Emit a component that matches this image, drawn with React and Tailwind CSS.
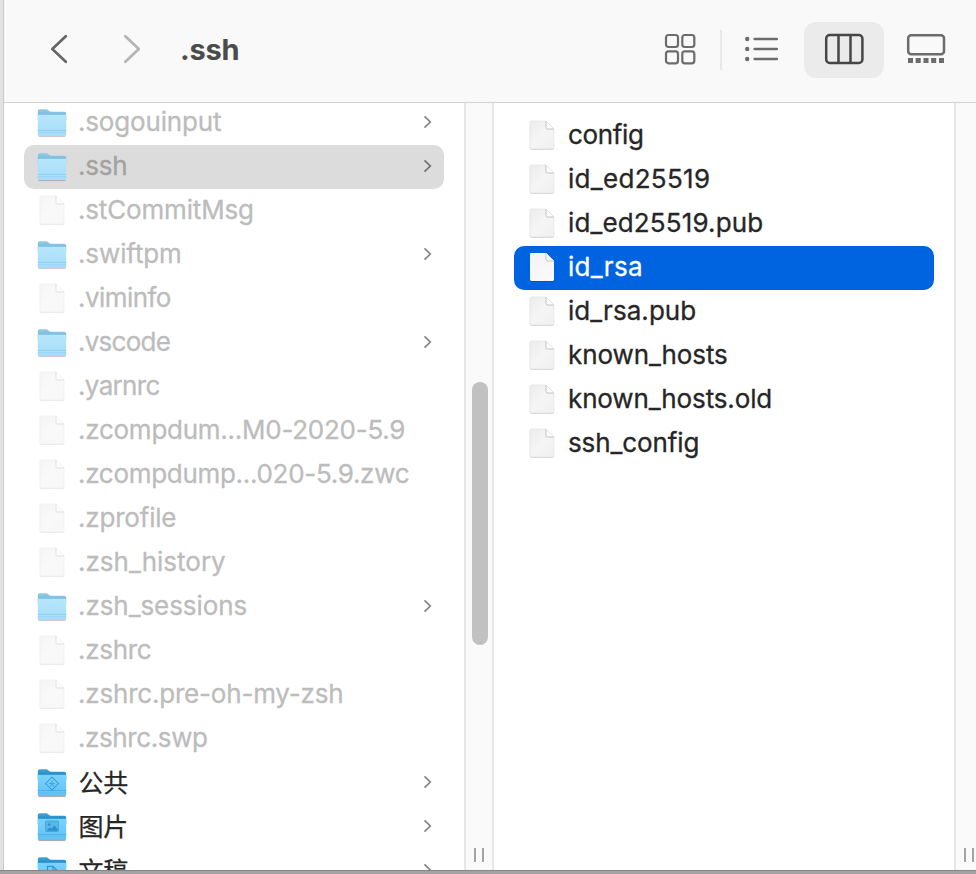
import React from "react";

const HOME_ITEMS = [
  { name: ".sogouinput", kind: "folder", dim: true, track: "tracking-[-0.17px]" },
  { name: ".ssh", kind: "folder", dim: true, selected: true, track: "tracking-[-0.25px]" },
  { name: ".stCommitMsg", kind: "file", dim: true, track: "tracking-[-0.17px]" },
  { name: ".swiftpm", kind: "folder", dim: true, track: "tracking-[-0.12px]" },
  { name: ".viminfo", kind: "file", dim: true, track: "tracking-[-0.55px]" },
  { name: ".vscode", kind: "folder", dim: true, track: "tracking-[-0.75px]" },
  { name: ".yarnrc", kind: "file", dim: true, track: "tracking-[-0.67px]" },
  { name: ".zcompdum...M0-2020-5.9", kind: "file", dim: true, track: "tracking-[-0.26px]" },
  { name: ".zcompdump...020-5.9.zwc", kind: "file", dim: true, track: "tracking-[-0.3px]" },
  { name: ".zprofile", kind: "file", dim: true, track: "tracking-[-0.2px]" },
  { name: ".zsh_history", kind: "file", dim: true, track: "tracking-[0px]" },
  { name: ".zsh_sessions", kind: "folder", dim: true, track: "tracking-[-0.07px]" },
  { name: ".zshrc", kind: "file", dim: true, track: "tracking-[-0.3px]" },
  { name: ".zshrc.pre-oh-my-zsh", kind: "file", dim: true, track: "tracking-[-0.2px]" },
  { name: ".zshrc.swp", kind: "file", dim: true, track: "tracking-[-0.4px]" },
  { name: "公共", kind: "folder", glyph: "public", track: "tracking-[-0.3px]" },
  { name: "图片", kind: "folder", glyph: "pictures", track: "tracking-[-0.3px]" },
  { name: "文稿", kind: "folder", glyph: "documents", track: "tracking-[-0.3px]" },
];

const SSH_ITEMS = [
  { name: "config", track: "tracking-[-0.35px]" },
  { name: "id_ed25519", track: "tracking-[0.3px]" },
  { name: "id_ed25519.pub", track: "tracking-[0.14px]" },
  { name: "id_rsa", selected: true, track: "tracking-[0.3px]" },
  { name: "id_rsa.pub", track: "tracking-[0.05px]" },
  { name: "known_hosts", track: "tracking-[-0.1px]" },
  { name: "known_hosts.old", track: "tracking-[-0.13px]" },
  { name: "ssh_config", track: "tracking-[-0.1px]" },
];

const STAMPS = [
  [-143, 145], [392, 125], [927, 105],
  [110, 415], [645, 395],
  [-165, 690], [370, 670], [905, 650],
  [88, 950], [623, 930],
];

function Defs() {
  return (
    <svg className="absolute size-0" aria-hidden="true">
      <defs>
        <linearGradient id="front" x1="0" y1="0" x2="0" y2="1">
          <stop offset="0" stopColor="#7bd3fd" />
          <stop offset="1" stopColor="#5fc0f5" />
        </linearGradient>
        <linearGradient id="back" x1="0" y1="0" x2="0" y2="1">
          <stop offset="0" stopColor="#4aa3d2" />
          <stop offset=".5" stopColor="#1f8dc8" />
          <stop offset="1" stopColor="#1f8dc8" />
        </linearGradient>
        <linearGradient id="frontDim" x1="0" y1="0" x2="0" y2="1">
          <stop offset="0" stopColor="#b6e6fc" />
          <stop offset="1" stopColor="#a5dcf8" />
        </linearGradient>
        <linearGradient id="backDim" x1="0" y1="0" x2="0" y2="1">
          <stop offset="0" stopColor="#96c9e6" />
          <stop offset=".5" stopColor="#7bbce2" />
          <stop offset="1" stopColor="#7bbce2" />
        </linearGradient>
        <linearGradient id="paper" x1="0" y1="0" x2="1" y2="1">
          <stop offset="0" stopColor="#ececec" />
          <stop offset="0.5" stopColor="#f5f5f5" />
          <stop offset="1" stopColor="#f0f0f0" />
        </linearGradient>
        <linearGradient id="paperLit" x1="0" y1="0" x2="1" y2="1">
          <stop offset="0" stopColor="#f3f3f3" />
          <stop offset="1" stopColor="#fbfbfb" />
        </linearGradient>
      </defs>
    </svg>
  );
}

function FolderIcon({ dim, glyph }) {
  return (
    <svg width="30" height="30" viewBox="0 0 30 30">
      <path d="M1.500 28.300h27" stroke="#000" strokeOpacity={dim ? ".2" : ".32"} strokeWidth="1.600" />
      <path d="M.8 3.200C.8 2 1.500 1.200 2.700 1.200h6.100c1.200 0 1.700.4 2.400 1l1 .9c.5.500 1 .7 1.700.7h13.300c1.200 0 2 .8 2 2V12H.8z" fill={dim ? "url(#backDim)" : "url(#back)"} />
      <path d="M.8 8.200c0-1 .5-1.400 1.400-1.400h25.600c.9 0 1.400.4 1.400 1.400v18.200c0 1-.8 1.700-1.800 1.700H2.600c-1 0-1.800-.7-1.800-1.700z" fill={dim ? "url(#frontDim)" : "url(#front)"} />
      <path d="M.8 22.500h28.400" stroke="#3ba3dd" strokeOpacity={dim ? ".25" : ".6"} strokeWidth="1" />
      <path d="M.8 24.500h28.400" stroke="#46aee6" strokeOpacity={dim ? ".15" : ".2"} strokeWidth="1" />
      {glyph === "public" && (
        <g fill="none" stroke="#3c9fd6" strokeWidth="1.100" strokeLinejoin="round">
          <path d="M15 9.200l6.500 6.500-6.500 6.500-6.500-6.500z" />
          <path d="M16 12.200l-2.300 3.300h4M13.700 15.500h-1.700M15.200 15.500l2 3.500M15 15.500l-1.500 3" strokeWidth=".9" />
        </g>
      )}
      {glyph === "pictures" && (
        <g>
          <rect x="8.500" y="9" width="13" height="10.500" rx="1" fill="#55b6ea" stroke="#45a6dc" />
          <circle cx="12" cy="12.500" r="1.200" fill="#2f8fc9" />
          <path d="M9.500 18.800l3-3.300 1.800 1.600 3-3.600 3.500 4v1.300z" fill="#2f8fc9" />
        </g>
      )}
      {glyph === "documents" && (
        <path d="M10.500 22V10.300h5.500l4 4V22M16 10.300v4h4" fill="none" stroke="#2f95cf" strokeWidth="1.200" />
      )}
    </svg>
  );
}

function FileIcon({ dim, lit }) {
  return (
    <svg width="30" height="32" viewBox="0 0 30 32" className={dim ? "-mt-[2px] opacity-50" : "-mt-[2px]"}>
      <path d="M2.800 4.500L27 10v19.200c0 .9-.6 1.500-1.500 1.500h-21c-.9 0-1.600-.6-1.600-1.500z" fill="#000" fillOpacity=".2" />
      <path d="M4.400 2h14.600l8 8v18.500c0 .9-.5 1.400-1.400 1.400H4.400c-.9 0-1.400-.5-1.400-1.400V3.400C3 2.500 3.500 2 4.400 2z" fill={lit ? "url(#paperLit)" : "url(#paper)"} stroke={lit ? "none" : "#e0e0e0"} strokeWidth=".6" />
      <path d="M19 2l8 8h-6.600c-.9 0-1.400-.5-1.400-1.400z" fill="#fdfdfd" />
      <path d="M19 2v6.800c0 .8.500 1.200 1.300 1.200H27" fill="none" stroke="#bdbdbd" strokeWidth=".9" />
      <path d="M19 2l8 8" stroke="#dadada" strokeWidth=".6" />
    </svg>
  );
}

function Chevron({ dark }) {
  return (
    <svg width="10" height="14" viewBox="0 0 10 14" fill="none" stroke={dark ? "#707070" : "#858585"} strokeWidth="1.700" className="-mt-[2px]">
      <path d="M1.500 1.300L7.300 7l-5.800 5.700" />
    </svg>
  );
}

function Row({ item, folderColumn }) {
  const { name, kind = "file", dim, selected, glyph, track } = item;
  let tone = dim ? "text-[#bcbcbc]" : "text-[#262626]";
  let bg = "";
  if (selected) {
    bg = folderColumn ? "bg-[#dcdcdc]" : "bg-[#0064e1]";
    tone = folderColumn ? "text-[#a2a2a2]" : "text-white";
  }
  const place = glyph
    ? "ml-[11.5px] text-[25px] [-webkit-text-stroke:0.25px]"
    : "-mt-[2px] ml-[11px] text-[26px] [-webkit-text-stroke:0.3px]";
  return (
    <div className={`flex h-11 shrink-0 items-center rounded-[10px] pl-[13px] pr-[11px] ${bg}`}>
      <span className="flex w-[30px] shrink-0 items-center justify-center">
        {kind === "folder" ? <FolderIcon dim={dim} glyph={glyph} /> : <FileIcon dim={dim} lit={selected} />}
      </span>
      <span className={`grow whitespace-pre leading-8 ${place} ${tone} ${track}`}>
        {name}
      </span>
      {kind === "folder" && <Chevron dark={selected} />}
    </div>
  );
}

function ResizeGrip() {
  return (
    <div className="flex gap-[6px]">
      <span className="h-[14px] w-[2px] bg-[#a3a3a3]" />
      <span className="h-[14px] w-[2px] bg-[#a3a3a3]" />
    </div>
  );
}

function Toolbar() {
  return (
    <header className="flex h-[102px] shrink-0 items-start bg-[#f8f9f8] pt-[22px]">
      <div className="flex h-14 w-[660px] items-center pl-[44px]">
        <svg width="24" height="32" viewBox="0 0 24 32" fill="none" stroke="#666" strokeWidth="2.700" strokeLinecap="round" strokeLinejoin="round" className="-mt-[2px]">
          <path d="M17.800 3.200L4.300 16l13.500 12.800" />
        </svg>
        <svg width="24" height="32" viewBox="0 0 24 32" fill="none" stroke="#b5b5b5" strokeWidth="2.700" strokeLinecap="round" strokeLinejoin="round" className="-mt-[2px] ml-[48px]">
          <path d="M5.300 3.200L18.800 16 5.300 28.800" />
        </svg>
        <h1 className="-mt-px ml-[36px] text-[29px] font-bold leading-[44px] tracking-[-0.2px] text-[#4b4b4b]">.ssh</h1>
      </div>
      <div className="flex h-14 items-center">
        <svg width="32" height="32" viewBox="0 0 32 32" fill="none" stroke="#6c6c6c" strokeWidth="2.200" className="-mt-[2px]">
          <rect x="2" y="2" width="12" height="12" rx="2.500" />
          <rect x="18.300" y="2" width="12" height="12" rx="2.500" />
          <rect x="2" y="18.300" width="12" height="12" rx="2.500" />
          <rect x="18.300" y="18.300" width="12" height="12" rx="2.500" />
        </svg>
        <span className="ml-6 h-10 w-[2px] bg-[#e9e9e9]" />
        <svg width="34" height="28" viewBox="0 0 34 28" className="-mt-[2px] ml-[22px]">
          <g fill="#6c6c6c">
            <circle cx="3.200" cy="4" r="2.200" />
            <circle cx="3.200" cy="14" r="2.200" />
            <circle cx="3.200" cy="24" r="2.200" />
          </g>
          <path d="M10.500 4h22.400M10.500 14h22.400M10.500 24h22.400" stroke="#6c6c6c" strokeWidth="2.300" strokeLinecap="round" />
        </svg>
        <div className="ml-[26px] flex h-14 w-20 items-center justify-center rounded-[12px] bg-[#ebebeb]">
          <svg width="40" height="32" viewBox="0 0 40 32" fill="none" stroke="#464646" strokeWidth="2.500" className="-mt-[2px]">
            <rect x="2.200" y="2" width="36.200" height="28" rx="3.500" />
            <path d="M14.500 2v28M26.500 2v28" />
          </svg>
        </div>
        <svg width="40" height="32" viewBox="0 0 40 32" className="-mt-[2px] ml-[22px]">
          <rect x="2.200" y="2.300" width="35.800" height="19" rx="3" fill="none" stroke="#6c6c6c" strokeWidth="2.500" />
          <path d="M2 25h5v5H2zM9.700 25h5v5h-5zM17.500 25h5v5h-5zM25.200 25h5v5h-5zM33 25h5v5h-5z" fill="#6c6c6c" />
        </svg>
      </div>
    </header>
  );
}

function Watermark() {
  return (
    <div className="pointer-events-none absolute inset-0 overflow-hidden">
      {STAMPS.map(([x, y]) => (
        <div
          key={`${x},${y}`}
          className="absolute origin-top-left -rotate-[44deg] whitespace-pre text-[27px] leading-[37px] tracking-[1px] text-black/[0.014]"
          style={{ left: x - 22, top: y - 12 }}
        >
          {"154AABC4A0\n885C659699\nD1C4EB86A6\nE1"}
        </div>
      ))}
    </div>
  );
}

export default function App() {
  return (
    <div className="relative flex h-[874px] w-[976px] flex-col overflow-hidden bg-white font-[Inter,'Noto_Sans_CJK_SC',sans-serif]">
      <Defs />
      <div className="flex min-h-0 grow">
        <div className="w-1 shrink-0 border-r border-[#c9c9c9] bg-[#e2e2e2]" />
        <div className="flex min-w-0 grow flex-col">
          <Toolbar />
          <div className="h-px shrink-0 bg-[#d2d2d2]" />
          <main className="flex min-h-0 grow">
            <section className="flex w-[460px] shrink-0 flex-col overflow-hidden px-5">
              <div className="-mt-[2px] flex flex-col">
                {HOME_ITEMS.map((item) => (
                  <Row key={item.name} item={item} folderColumn />
                ))}
              </div>
            </section>
            <div className="flex w-[30px] shrink-0 flex-col items-center border-x-2 border-x-[#e7e7e7] bg-[#fafafa] pt-[279px]">
              <div className="ml-[2px] h-[263px] w-4 rounded-full bg-[#c1c1c1]" />
              <div className="mt-[203px]">
                <ResizeGrip />
              </div>
            </div>
            <section className="w-[460px] shrink-0 px-5 pt-[11px]">
              {SSH_ITEMS.map((item) => (
                <Row key={item.name} item={item} />
              ))}
            </section>
            <div className="flex grow flex-col items-end border-l-2 border-[#e6e6e6] bg-[#fafafa] pr-[2px] pt-[745px]">
              <ResizeGrip />
            </div>
          </main>
        </div>
      </div>
      <div className="h-1 shrink-0 border-t border-[#858585] bg-[#a2a2a2]" />
      <Watermark />
    </div>
  );
}
